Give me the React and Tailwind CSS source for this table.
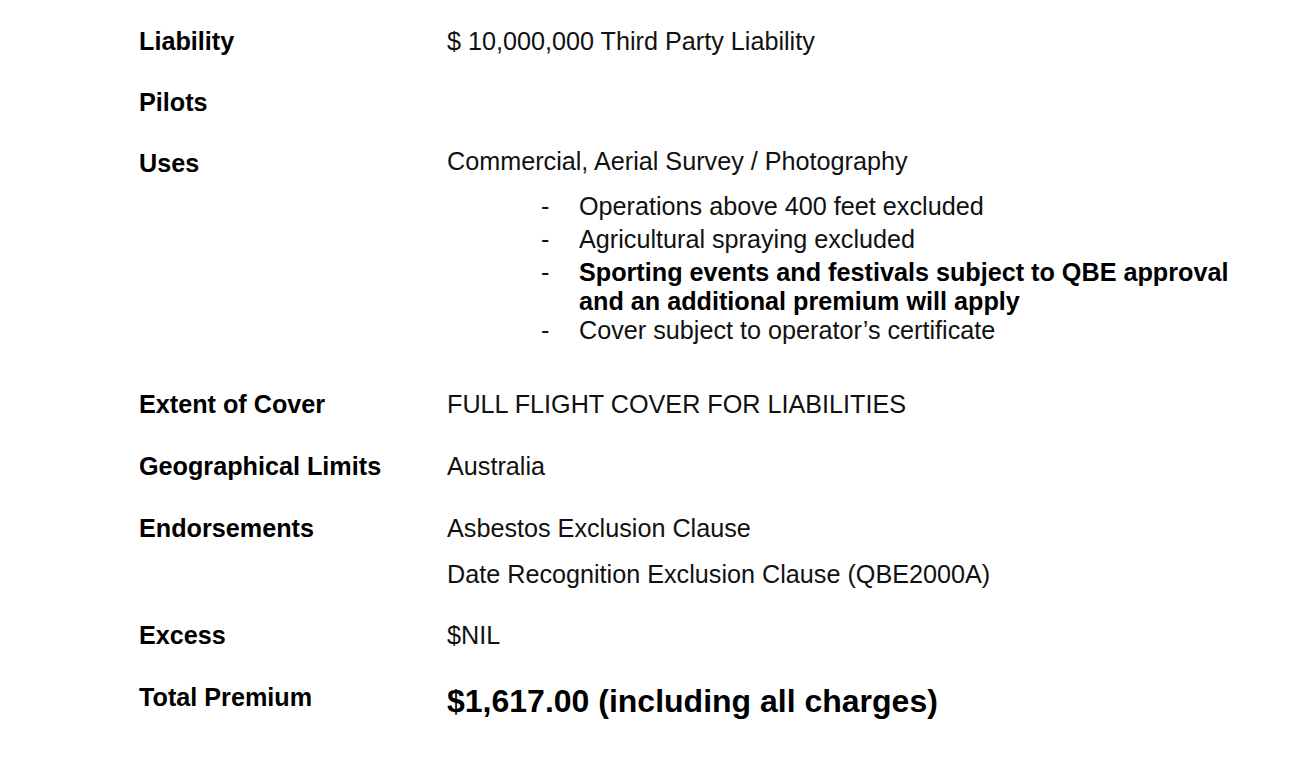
import React from "react";

const rows = [
  { label: "Liability", values: ["$ 10,000,000 Third Party Liability"] },
  { label: "Pilots", values: [] },
];

const uses = [
  { text: "Operations above 400 feet excluded", bold: false, gap: "mb-[4px]" },
  { text: "Agricultural spraying excluded", bold: false, gap: "mb-[4px]" },
  {
    text: "Sporting events and festivals subject to QBE approval and an additional premium will apply",
    bold: true,
    gap: "",
  },
  { text: "Cover subject to operator\u2019s certificate", bold: false, gap: "" },
];

function Row({ label, children, className = "" }) {
  return (
    <div className={`flex ${className}`}>
      <div className="w-[308px] shrink-0 font-bold text-black leading-[30px]">
        {label}
      </div>
      <div className="flex-1 text-[#111] leading-[30px]">{children}</div>
    </div>
  );
}

export default function App() {
  return (
    <div
      className="min-h-[776px] w-full bg-white pl-[139px] pt-[26px] text-[25.2px]"
      style={{ fontFamily: '"Liberation Sans", Arial, sans-serif' }}
    >
      {rows.map((r) => (
        <Row key={r.label} label={r.label} className="mb-[31px] h-[30px]">
          {r.values.map((v) => (
            <div key={v}>{v}</div>
          ))}
        </Row>
      ))}

      {/* uses */}
      <Row label="Uses">
        <div className="-mt-[2px]">Commercial, Aerial Survey / Photography</div>
        <ul className="mt-[16px] pl-[94px]">
          {uses.map((u) => (
            <li key={u.text} className={`flex leading-[29px] ${u.gap}`}>
              <span className="w-[38px] shrink-0">-</span>
              <span className={`w-[670px] ${u.bold ? "font-bold text-black" : ""}`}>
                {u.text}
              </span>
            </li>
          ))}
        </ul>
      </Row>

      <Row label="Extent of Cover" className="mt-[44px]">
        FULL FLIGHT COVER FOR LIABILITIES
      </Row>

      <Row label="Geographical Limits" className="mt-[32px]">
        Australia
      </Row>

      <Row label="Endorsements" className="mt-[32px]">
        <div>Asbestos Exclusion Clause</div>
        <div className="mt-[16px]">Date Recognition Exclusion Clause (QBE2000A)</div>
      </Row>

      <Row label="Excess" className="mt-[31px]">
        $NIL
      </Row>

      <Row label="Total Premium" className="mt-[32px]">
        <div className="text-[32px] font-bold text-black leading-[36px] mt-[1px]">
          $1,617.00 (including all charges)
        </div>
      </Row>
    </div>
  );
}
